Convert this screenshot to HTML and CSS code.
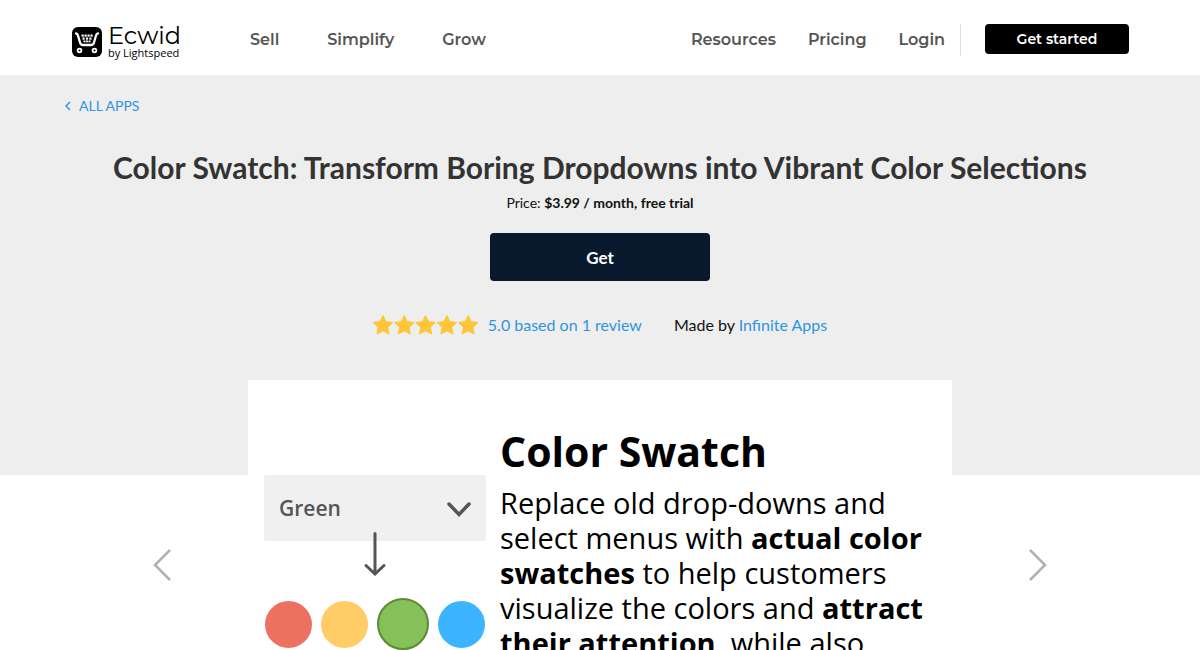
FILE: index.html
```html
<!DOCTYPE html>
<html lang="en">
<head>
    <meta charset="UTF-8">
    <meta name="viewport" content="width=device-width, initial-scale=1.0">
    <title>Color Swatch - Ecwid App Market</title>
    <link rel="stylesheet" href="styles.css">
</head>
<body>
    <header class="header">
        <a class="logo" href="#">
            <svg class="logo-icon" viewBox="0 0 30 30" aria-hidden="true">
                <rect width="30" height="30" rx="6" fill="#000"/>
                <path d="M4 6.500 Q5.500 6.500 6 8.500 L8 15.500 Q8.700 18 11 18 H19 Q21.300 18 22 15.500 L24 8.500 Q24.500 6.500 26 6.500" fill="none" stroke="#fff" stroke-width="2.300" stroke-linecap="round"/>
                <g fill="#fff">
                    <rect x="9.500" y="7.500" width="2.200" height="2.200"/>
                    <rect x="12.500" y="7.500" width="2.200" height="2.200"/>
                    <rect x="15.500" y="7.500" width="2.200" height="2.200"/>
                    <rect x="18.500" y="7.500" width="2.200" height="2.200"/>
                    <rect x="10.500" y="10.500" width="2.200" height="2.200"/>
                    <rect x="13.900" y="10.500" width="2.200" height="2.200"/>
                    <rect x="17.300" y="10.500" width="2.200" height="2.200"/>
                    <rect x="11.500" y="13.500" width="2" height="1.800"/>
                    <rect x="14" y="13.500" width="2" height="1.800"/>
                    <rect x="16.500" y="13.500" width="2" height="1.800"/>
                </g>
                <circle cx="7.500" cy="23.500" r="1.900" fill="none" stroke="#fff" stroke-width="1.800"/>
                <circle cx="22.500" cy="23.500" r="1.900" fill="none" stroke="#fff" stroke-width="1.800"/>
            </svg>
            <span class="logo-text">
                <span class="logo-name">Ecwid</span>
                <span class="logo-by">by Lightspeed</span>
            </span>
        </a>
        <nav class="nav nav-main">
            <a href="#">Sell</a>
            <a href="#">Simplify</a>
            <a href="#">Grow</a>
        </nav>
        <nav class="nav nav-side">
            <a href="#">Resources</a>
            <a href="#">Pricing</a>
            <a href="#">Login</a>
        </nav>
        <button class="btn-start" type="button">Get started</button>
    </header>

    <main>
        <section class="hero">
            <a class="back" href="#">
                <svg class="back-icon" viewBox="0 0 6 10" aria-hidden="true"><path d="M5 1 L1 5 L5 9" fill="none" stroke="currentColor" stroke-width="1.400"/></svg>
                ALL APPS
            </a>
            <h1>Color Swatch: Transform Boring Dropdowns into Vibrant Color Selections</h1>
            <p class="price">Price: <strong>$3.99 / month, free trial</strong></p>
            <button class="btn-get" type="button">Get</button>
            <div class="info">
                <div class="rating">
                    <svg class="stars" viewBox="0 0 106 20" role="img" aria-label="5 stars">
                        <defs>
                            <path id="star" d="M10 0.500 L12.900 6.600 L19.800 7.500 L14.800 12.200 L16 19 L10 15.800 L4 19 L5.200 12.200 L0.200 7.500 L7.100 6.600 Z" fill="#fec636" stroke="#fec636" stroke-linejoin="round"/>
                        </defs>
                        <use href="#star"/>
                        <use href="#star" x="21.300"/>
                        <use href="#star" x="42.600"/>
                        <use href="#star" x="63.900"/>
                        <use href="#star" x="85.200"/>
                    </svg>
                    <a href="#">5.0 based on 1 review</a>
                </div>
                <div>Made by <a href="#">Infinite Apps</a></div>
            </div>
        </section>

        <section class="carousel">
            <button class="arrow" type="button" aria-label="Previous">
                <svg viewBox="0 0 18 32"><path d="M17 1 L2 16 L17 31" fill="none" stroke="#b0b0b0" stroke-width="2.500"/></svg>
            </button>
            <div class="slide">
                <div class="demo">
                    <select class="demo-select" aria-label="Color">
                        <option>Green</option>
                        <option>Red</option>
                        <option>Yellow</option>
                        <option>Blue</option>
                    </select>
                    <svg class="demo-chevron" viewBox="0 0 24 16" aria-hidden="true"><path d="M2 2 L12 12.500 L22 2" fill="none" stroke="#555" stroke-width="3.500" stroke-linecap="round"/></svg>
                    <svg class="demo-arrow" viewBox="0 0 22 44" aria-hidden="true"><path d="M11 1.500 V42 M2 33.500 L11 42 L20 33.500" fill="none" stroke="#555" stroke-width="3" stroke-linecap="round"/></svg>
                    <div class="swatches">
                        <span class="swatch red"></span>
                        <span class="swatch yellow"></span>
                        <span class="swatch green"></span>
                        <span class="swatch blue"></span>
                    </div>
                </div>
                <div class="slide-text">
                    <h2>Color Swatch</h2>
                    <p>Replace old drop-downs and select menus with <strong>actual color swatches</strong> to help customers visualize the colors and <strong>attract their attention</strong>, while also</p>
                </div>
            </div>
            <button class="arrow" type="button" aria-label="Next">
                <svg viewBox="0 0 18 32"><path d="M1 1 L16 16 L1 31" fill="none" stroke="#b0b0b0" stroke-width="2.500"/></svg>
            </button>
        </section>
    </main>
</body>
</html>
```

FILE: styles.css
```css
* {
    box-sizing: border-box;
}
body {
    margin: 0;
    font-family: Lato, sans-serif;
    font-size: 16px;
    line-height: 24px;
    color: #111;
    background: #fff;
}
a {
    color: #2f94e0;
    text-decoration: none;
}
button {
    border: none;
    padding: 0;
    cursor: pointer;
}
.header {
    display: flex;
    align-items: center;
    height: 75px;
    padding: 0 71px 0 72px;
    font-family: Montserrat, Inter, sans-serif;
}
.logo {
    display: flex;
    align-items: center;
    gap: 6px;
    width: 178px;
    padding-top: 8px;
    color: #000;
}
.logo-icon {
    width: 30px;
    height: 30px;
}
.logo-text {
    display: flex;
    flex-direction: column;
}
.logo-name {
    font-size: 24px;
    line-height: 22px;
}
.logo-by {
    font-family: "Open Sans", sans-serif;
    font-size: 11px;
    line-height: 12px;
}
.nav {
    display: flex;
    align-items: center;
    height: 32px;
    margin-top: 4px;
}
.nav a {
    color: #555;
    font-size: 16px;
    font-weight: 600;
}
.nav-main {
    gap: 48px;
}
.nav-side {
    gap: 32px;
    margin-left: auto;
    margin-right: 24px;
    padding-right: 15px;
    border-right: 1px solid #ddd;
}
.btn-start {
    width: 144px;
    height: 30px;
    margin-top: 3px;
    border-radius: 4px;
    background: #000;
    color: #fff;
    font-family: Montserrat, Inter, sans-serif;
    font-size: 14px;
    font-weight: 600;
}
.hero {
    display: flex;
    flex-direction: column;
    align-items: center;
    padding: 19px 65px 138px;
    background: #eee;
}
.back {
    display: flex;
    align-items: center;
    align-self: flex-start;
    gap: 8px;
    font-size: 14px;
}
.back-icon {
    width: 6px;
    height: 10px;
}
h1 {
    margin: 29px 0 0;
    font-size: 30px;
    font-weight: 700;
    line-height: 40px;
    text-align: center;
    color: #333;
}
.price {
    margin: 5px 0 19px;
    font-size: 14px;
    line-height: 22px;
}
.btn-get {
    width: 220px;
    height: 48px;
    border-radius: 4px;
    background: #091a2e;
    color: #fff;
    font-family: Lato, sans-serif;
    font-size: 17px;
    font-weight: 700;
}
.info {
    display: flex;
    flex-wrap: wrap;
    justify-content: center;
    gap: 32px;
    margin-top: 32px;
}
.rating {
    display: flex;
    align-items: center;
    gap: 9px;
}
.stars {
    width: 106px;
    height: 20px;
}
.carousel {
    display: flex;
    justify-content: center;
    align-items: center;
    gap: 77px;
    margin-top: -95px;
}
.arrow {
    background: none;
}
.arrow svg {
    display: block;
    width: 18px;
    height: 32px;
}
.slide {
    display: flex;
    gap: 14px;
    max-width: 704px;
    min-height: 370px;
    padding: 43px 16px;
    background: #fff;
}
.demo {
    display: grid;
    grid-template-columns: 222px;
    grid-template-rows: 57px 44px;
    align-content: start;
    padding-top: 52px;
}
.demo-select {
    grid-area: 1 / 1;
    height: 66px;
    padding: 0 15px;
    border: none;
    border-radius: 2px;
    appearance: none;
    background: #f0f0f0;
    color: #555;
    font-family: "Open Sans", sans-serif;
    font-size: 21px;
    font-weight: 600;
}
.demo-chevron {
    grid-area: 1 / 1;
    align-self: center;
    justify-self: end;
    width: 24px;
    height: 16px;
    margin: 12px 15px 0;
    pointer-events: none;
}
.demo-arrow {
    grid-area: 2 / 1;
    justify-self: center;
    width: 22px;
    height: 44px;
}
.swatches {
    display: flex;
    align-items: center;
    justify-content: space-between;
    padding: 22px 1px 0;
}
.swatch {
    width: 47px;
    height: 47px;
    border-radius: 50%;
}
.red {
    background: #ec7161;
}
.yellow {
    background: #ffcc66;
}
.green {
    width: 52px;
    height: 52px;
    border: 2px solid #5c8a38;
    background: #86c058;
}
.blue {
    background: #3cb4ff;
}
.slide-text {
    flex: 1;
    font-family: "Open Sans", sans-serif;
    color: #000;
}
h2 {
    margin: 0;
    font-size: 41px;
    line-height: 56px;
}
.slide-text p {
    margin: 6px 0 0;
    font-size: 29px;
    line-height: 35px;
}
```
